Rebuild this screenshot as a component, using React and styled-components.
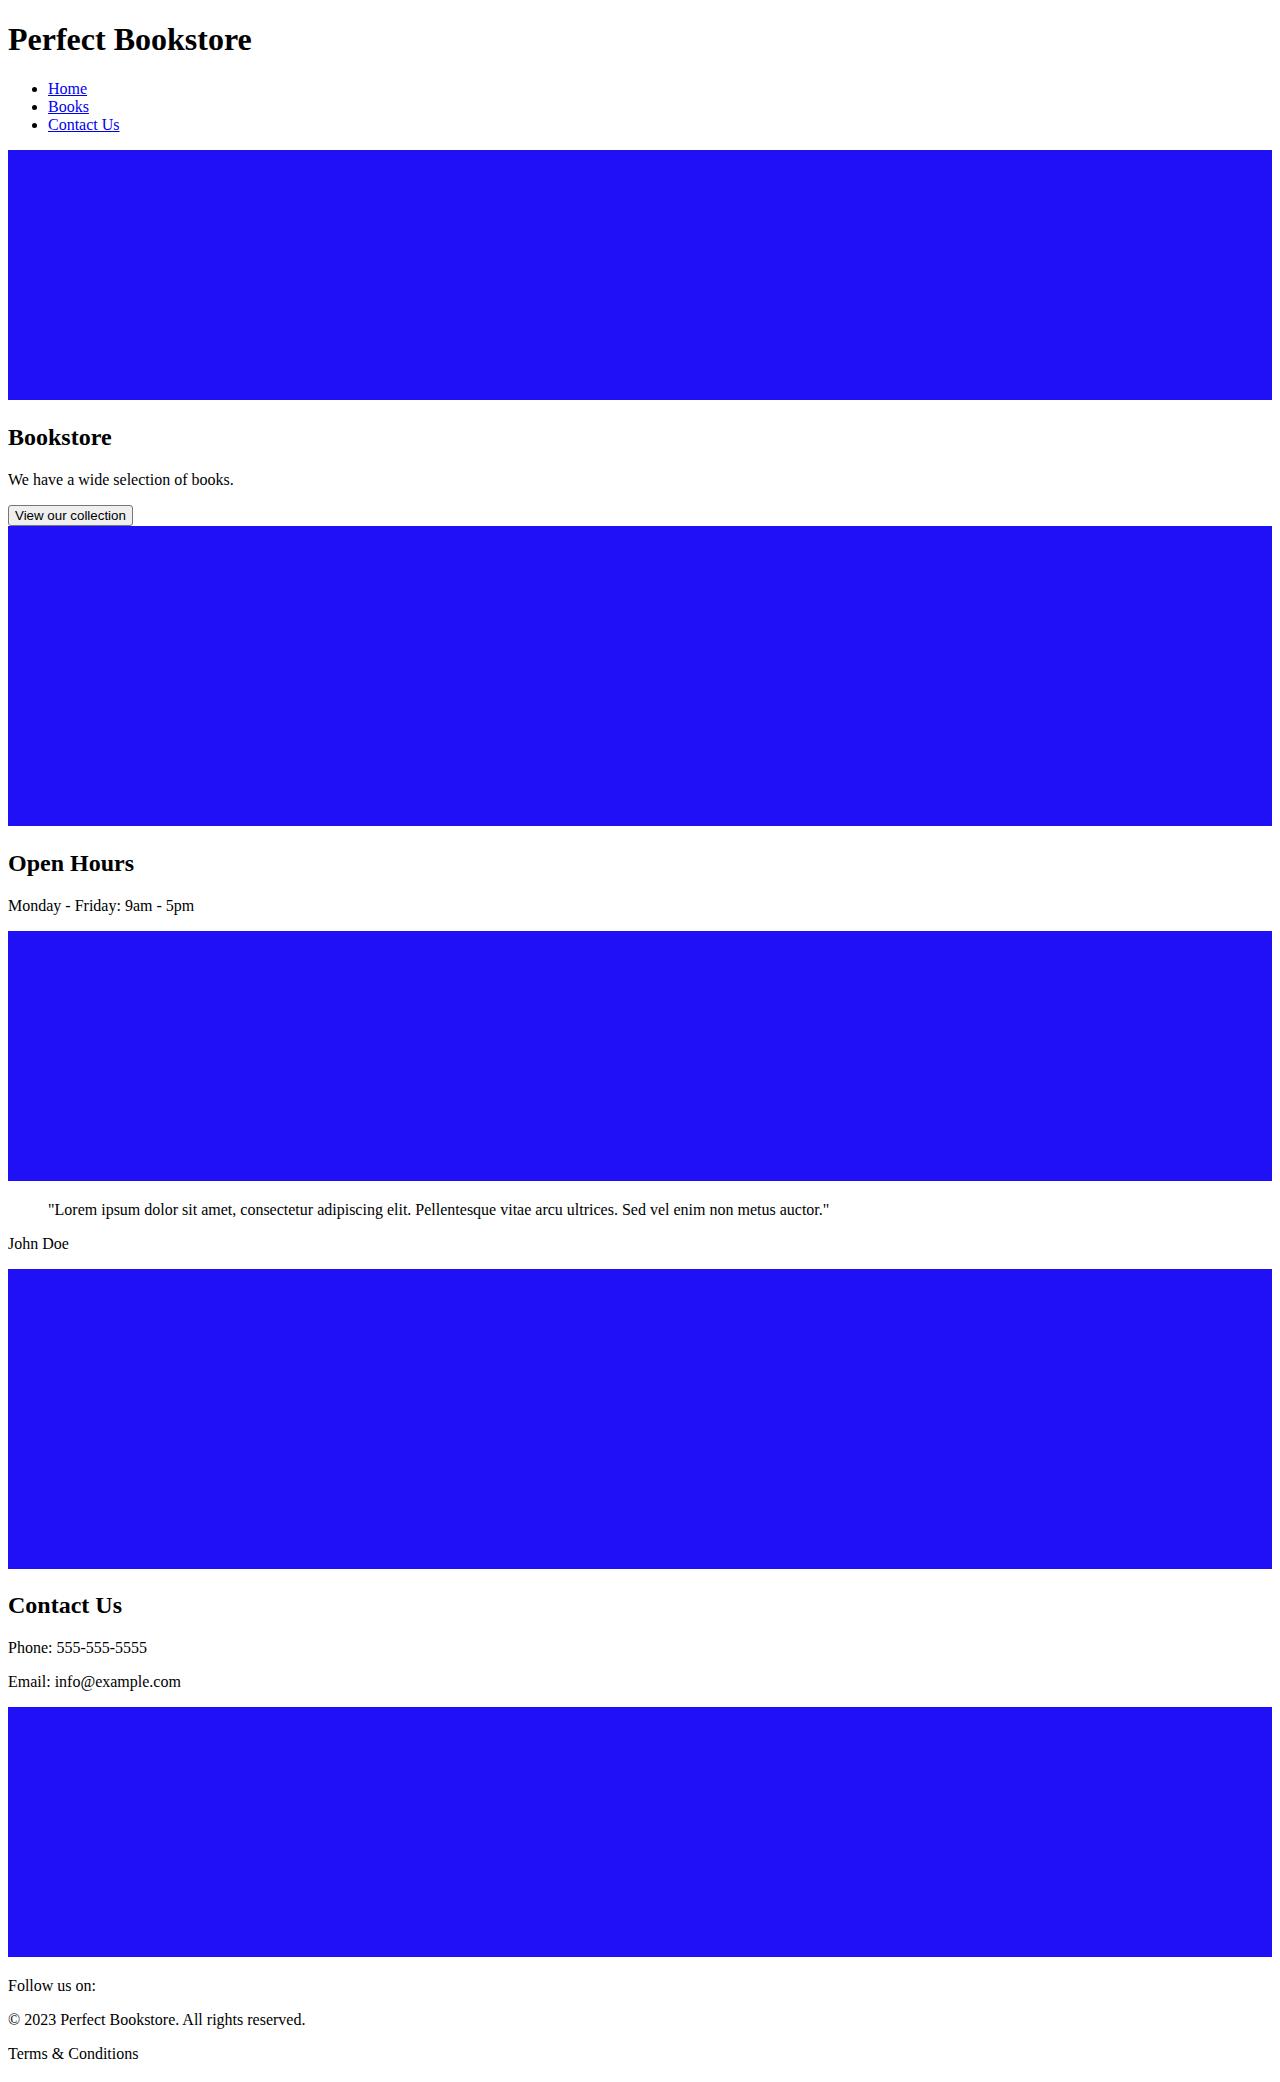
import React from 'react';
import styled, { createGlobalStyle } from 'styled-components';

const GlobalStyle = createGlobalStyle`
  body {
    margin: 0 8px 8px;
    background: #fff;
    color: #000;
    font-family: "Liberation Serif", "Times New Roman", serif;
    font-size: 16px;
  }
`;

const Title = styled.h1`
  font-size: 32px;
  font-weight: bold;
  margin: 21.44px 0;
`;

const NavList = styled.ul`
  margin: 16px 0;
  padding-left: 40px;
  list-style: disc;
`;

const NavLink = styled.a`
  color: #0000ee;
  text-decoration: underline;
`;

const Section = styled.section`
  display: block;
`;

// placeholder picture, inline-block so it keeps the descender gap under it
const Picture = styled.div`
  display: inline-block;
  vertical-align: baseline;
  width: 100%;
  height: ${(p) => p.$height}px;
  background-color: #1f10f5;
`;

const Heading = styled.h2`
  font-size: 24px;
  font-weight: bold;
  margin: 19.92px 0;
`;

const Text = styled.p`
  margin: 16px 0;
`;

const CollectionButton = styled.button`
  display: inline-block;
  font-family: "Liberation Sans", Arial, sans-serif;
  font-size: 13.33px;
  color: #000;
  padding: 2px 6px;
  background-color: #efefef;
  border: 1px solid #767676;
  border-radius: 3px;
  cursor: pointer;
`;

const ButtonRow = styled.div`
  line-height: normal;
`;

const Quote = styled.blockquote`
  margin: 16px 40px;
`;

const links = ['Home', 'Books', 'Contact Us'];

const App = () => (
  <>
    <GlobalStyle />
    <header>
      <Title>Perfect Bookstore</Title>
      <nav>
        <NavList>
          {links.map((label) => (
            <li key={label}>
              <NavLink href="#">{label}</NavLink>
            </li>
          ))}
        </NavList>
      </nav>
    </header>

    <Section>
      <Picture $height={250} />
      <Heading>Bookstore</Heading>
      <Text>We have a wide selection of books.</Text>
      <ButtonRow>
        <CollectionButton type="button">View our collection</CollectionButton>
      </ButtonRow>
    </Section>

    <Section>
      <Picture $height={300} />
      <Heading>Open Hours</Heading>
      <Text>Monday - Friday: 9am - 5pm</Text>
    </Section>

    <Section>
      <Picture $height={250} />
      <Quote>
        "Lorem ipsum dolor sit amet, consectetur adipiscing elit. Pellentesque vitae arcu
        ultrices. Sed vel enim non metus auctor."
      </Quote>
      <Text>John Doe</Text>
    </Section>

    <Section>
      <Picture $height={300} />
      <Heading>Contact Us</Heading>
      <Text>Phone: 555-555-5555</Text>
      <Text>Email: info@example.com</Text>
    </Section>

    <footer>
      <Picture $height={250} />
      <Text>Follow us on:</Text>
      <Text>© 2023 Perfect Bookstore. All rights reserved.</Text>
      <Text>Terms &amp; Conditions</Text>
    </footer>
  </>
);

export default App;
